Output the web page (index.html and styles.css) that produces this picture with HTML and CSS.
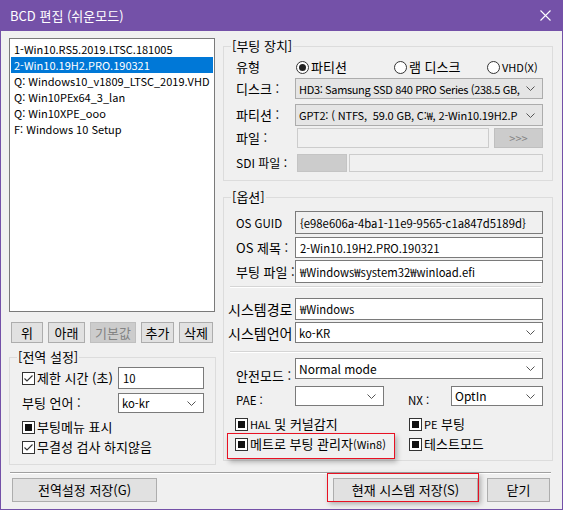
FILE: index.html
```html
<!DOCTYPE html>
<html lang="ko">
<head>
<meta charset="utf-8">
<title>BCD 편집 (쉬운모드)</title>
<link rel="stylesheet" href="styles.css">
</head>
<body>
<div class="window">
  <div class="titlebar">
    <span class="title">BCD 편집 (쉬운모드)</span>
    <svg class="close" width="11" height="11" viewBox="0 0 11 11"><path d="M0.5 0.5L10.5 10.5M10.5 0.5L0.5 10.5" stroke="#fff" stroke-width="1.1" fill="none"/></svg>
  </div>
  <div class="body">
    <div class="cols">
      <div class="leftcol">
        <ul class="listbox">
          <li>1-Win10.RS5.2019.LTSC.181005</li>
          <li class="sel">2-Win10.19H2.PRO.190321</li>
          <li>Q: Windows10_v1809_LTSC_2019.VHD</li>
          <li>Q: Win10PEx64_3_lan</li>
          <li>Q: Win10XPE_ooo</li>
          <li>F: Windows 10 Setup</li>
        </ul>
        <div class="btnrow">
          <div class="btn w32">위</div>
          <div class="btn w37">아래</div>
          <div class="btn w46 disabled">기본값</div>
          <div class="btn w33">추가</div>
          <div class="btn w34">삭제</div>
        </div>
        <fieldset class="group">
          <legend>[전역 설정]</legend>
          <div class="gbody gleft">
            <div class="lrow r1">
              <div class="chk lab96"><svg class="cb" width="13" height="13" viewBox="0 0 13 13"><rect x="0.5" y="0.5" width="12" height="12" fill="#fff" stroke="#333"/><path d="M2.5 6.5L5 9L10.5 3.5" fill="none" stroke="#333" stroke-width="1.1"/></svg><span>제한 시간 (초)</span></div>
              <div class="field w86">10</div>
            </div>
            <div class="lrow r2">
              <div class="lab lab96">부팅 언어 :</div>
              <div class="combo w86"><span class="ctext">ko-kr</span><svg class="chev" width="9" height="5" viewBox="0 0 9 5"><path d="M0.5 0.5L4.5 4.5L8.5 0.5" fill="none" stroke="#555"/></svg></div>
            </div>
            <div class="lrow r3">
              <div class="chk"><svg class="cb" width="13" height="13" viewBox="0 0 13 13"><rect x="0.5" y="0.5" width="12" height="12" fill="#fff" stroke="#333"/><rect x="3" y="3" width="7" height="7" fill="#111"/></svg><span>부팅메뉴 표시</span></div>
            </div>
            <div class="lrow r4">
              <div class="chk"><svg class="cb" width="13" height="13" viewBox="0 0 13 13"><rect x="0.5" y="0.5" width="12" height="12" fill="#fff" stroke="#333"/><path d="M2.5 6.5L5 9L10.5 3.5" fill="none" stroke="#333" stroke-width="1.1"/></svg><span>무결성 검사 하지않음</span></div>
            </div>
          </div>
        </fieldset>
      </div>
      <div class="rightcol">
        <fieldset class="group">
          <legend>[부팅 장치]</legend>
          <div class="gbody gright boot">
            <div class="row b1">
              <div class="lab">유형</div>
              <div class="radio rw98"><svg width="13" height="13" viewBox="0 0 13 13"><circle cx="6.5" cy="6.5" r="6" fill="#fff" stroke="#333"/><circle cx="6.5" cy="6.5" r="3.5" fill="#222"/></svg><span>파티션</span></div>
              <div class="radio rw93"><svg width="13" height="13" viewBox="0 0 13 13"><circle cx="6.5" cy="6.5" r="6" fill="#fff" stroke="#333"/></svg><span>램 디스크</span></div>
              <div class="radio"><svg width="13" height="13" viewBox="0 0 13 13"><circle cx="6.5" cy="6.5" r="6" fill="#fff" stroke="#333"/></svg><span class="small">VHD(X)</span></div>
            </div>
            <div class="row b2">
              <div class="lab">디스크 :</div>
              <div class="combo gray grow"><span class="ctext tight">HD3: Samsung SSD 840 PRO Series (238.5 GB,</span><svg class="chev" width="9" height="5" viewBox="0 0 9 5"><path d="M0.5 0.5L4.5 4.5L8.5 0.5" fill="none" stroke="#555"/></svg></div>
            </div>
            <div class="row b3">
              <div class="lab">파티션 :</div>
              <div class="combo gray grow"><span class="ctext">GPT2: ( NTFS,&nbsp; 59.0 GB, C:₩, 2-Win10.19H2.P</span><svg class="chev" width="9" height="5" viewBox="0 0 9 5"><path d="M0.5 0.5L4.5 4.5L8.5 0.5" fill="none" stroke="#555"/></svg></div>
            </div>
            <div class="row b4">
              <div class="lab">파일 :</div>
              <div class="field off fileinput"></div>
              <div class="btn disabled morebtn">&gt;&gt;&gt;</div>
            </div>
            <div class="row b5">
              <div class="lab sdi">SDI 파일 :</div>
              <div class="graybox"></div>
              <div class="field off grow"></div>
            </div>
          </div>
        </fieldset>
        <fieldset class="group opts">
          <legend>[옵션]</legend>
          <div class="gbody gright">
            <div class="row o1">
              <div class="lab lat">OS GUID</div>
              <div class="field ro grow">{e98e606a-4ba1-11e9-9565-c1a847d5189d}</div>
            </div>
            <div class="row o2">
              <div class="lab">OS 제목 :</div>
              <div class="field grow">2-Win10.19H2.PRO.190321</div>
            </div>
            <div class="row o3">
              <div class="lab">부팅 파일 :</div>
              <div class="field grow">₩Windows₩system32₩winload.efi</div>
            </div>
            <div class="etch e1"></div>
            <div class="row o4">
              <div class="lab wide">시스템경로</div>
              <div class="field grow">₩Windows</div>
            </div>
            <div class="row o5">
              <div class="lab wide">시스템언어</div>
              <div class="combo grow"><span class="ctext">ko-KR</span><svg class="chev" width="9" height="5" viewBox="0 0 9 5"><path d="M0.5 0.5L4.5 4.5L8.5 0.5" fill="none" stroke="#555"/></svg></div>
            </div>
            <div class="etch e2"></div>
            <div class="row o6">
              <div class="lab low">안전모드 :</div>
              <div class="combo grow"><span class="ctext">Normal mode</span><svg class="chev" width="9" height="5" viewBox="0 0 9 5"><path d="M0.5 0.5L4.5 4.5L8.5 0.5" fill="none" stroke="#555"/></svg></div>
            </div>
            <div class="row o7">
              <div class="lab low2">PAE :</div>
              <div class="combo paesel"><span class="ctext"></span><svg class="chev" width="9" height="5" viewBox="0 0 9 5"><path d="M0.5 0.5L4.5 4.5L8.5 0.5" fill="none" stroke="#555"/></svg></div>
              <div class="lab low2 nxlab">NX :</div>
              <div class="combo grow"><span class="ctext">OptIn</span><svg class="chev" width="9" height="5" viewBox="0 0 9 5"><path d="M0.5 0.5L4.5 4.5L8.5 0.5" fill="none" stroke="#555"/></svg></div>
            </div>
            <div class="chkgrid c1">
              <div class="chk"><svg class="cb" width="13" height="13" viewBox="0 0 13 13"><rect x="0.5" y="0.5" width="12" height="12" fill="#fff" stroke="#333"/><rect x="3" y="3" width="7" height="7" fill="#111"/></svg><span><span class="small">HAL</span> 및 커널감지</span></div>
              <div class="chk"><svg class="cb" width="13" height="13" viewBox="0 0 13 13"><rect x="0.5" y="0.5" width="12" height="12" fill="#fff" stroke="#333"/><rect x="3" y="3" width="7" height="7" fill="#111"/></svg><span><span class="small">PE</span> 부팅</span></div>
            </div>
            <div class="chkgrid c2">
              <div class="chk marked"><svg class="cb" width="13" height="13" viewBox="0 0 13 13"><rect x="0.5" y="0.5" width="12" height="12" fill="#fff" stroke="#333"/><rect x="3" y="3" width="7" height="7" fill="#111"/></svg><span>메트로 부팅 관리자<span class="small">(Win8)</span></span></div>
              <div class="chk"><svg class="cb" width="13" height="13" viewBox="0 0 13 13"><rect x="0.5" y="0.5" width="12" height="12" fill="#fff" stroke="#333"/><rect x="3" y="3" width="7" height="7" fill="#111"/></svg><span>테스트모드</span></div>
            </div>
          </div>
        </fieldset>
      </div>
    </div>
    <div class="sep"></div>
    <div class="footer">
      <div class="btn fbtn">전역설정 저장(G)</div>
      <div class="spacer"></div>
      <div class="btn fbtn marked2">현재 시스템 저장(S)</div>
      <div class="btn closebtn">닫기</div>
    </div>
  </div>
</div>
</body>
</html>
```

FILE: styles.css
```css
* { box-sizing: border-box; }
html, body { margin: 0; padding: 0; background: #f0f0f0; }
body {
  font-family: "Noto Sans CJK KR", "Noto Sans", sans-serif;
  font-size: 12px;
  line-height: 16px;
  color: #000;
}
.window {
  width: 563px;
  height: 510px;
  background: #f0f0f0;
  border: 1px solid #7451a8;
  border-top: 0;
  display: flex;
  flex-direction: column;
}
.titlebar {
  height: 31px;
  margin: 0 -1px;
  background: #7451a8;
  color: #fff;
  display: flex;
  align-items: center;
  justify-content: space-between;
  padding: 0 12px 0 10px;
  font-size: 13px;
}
.body {
  flex: 1;
  display: flex;
  flex-direction: column;
  padding: 7px 9px 0 8px;
}
.cols { display: flex; gap: 7px; }
.leftcol { width: 207px; display: flex; flex-direction: column; }
.rightcol { width: 330px; display: flex; flex-direction: column; }

.listbox {
  list-style: none;
  margin: 0;
  width: 206px;
  height: 274px;
  border: 1px solid #7a7a7a;
  background: #fff;
  padding: 2px 1px;
}
.listbox li {
  height: 16px;
  line-height: 16px;
  padding-left: 3px;
  white-space: nowrap;
  font-size: 11px;
}
.listbox li.sel { background: #0078d7; color: #fff; }

.btnrow { display: flex; gap: 5px; padding-left: 2px; margin-top: 10px; }
.btn {
  height: 21px;
  border: 1px solid #adadad;
  background: #e1e1e1;
  display: flex;
  align-items: center;
  justify-content: center;
  font-size: 13px;
  white-space: nowrap;
}
.btn.disabled { background: #cccccc; border-color: #bfbfbf; color: #838383; }
.w32 { width: 32px; } .w37 { width: 37px; } .w46 { width: 46px; } .w33 { width: 33px; } .w34 { width: 34px; }

.group {
  margin: 0;
  padding: 0;
  min-width: 0;
  border: 1px solid #dcdcdc;
}
.group legend {
  margin-left: 7px;
  padding: 0 1px;
  font-size: 13px;
  line-height: 16px;
}
.leftcol .group { margin-top: 6px; }
.opts { margin-top: 8px; }

.gbody { display: flex; flex-direction: column; }
.gleft { padding: 2px 11px 9px 12px; }
.gright { padding: 0 9px 8px 12px; }

.lrow, .row { display: flex; align-items: center; }
.lab { font-size: 13px; white-space: nowrap; flex: none; }
.lab.lat { font-size: 11.5px; }
.lab96 { width: 96px; }
.w86 { width: 86px; }
.r1 { height: 22px; }
.r2 { height: 20px; margin-top: 4px; }
.r3 { height: 16px; margin-top: 6px; }
.r4 { height: 16px; margin-top: 4px; }

.chk { display: flex; align-items: center; gap: 2px; font-size: 13px; white-space: nowrap; }
.cb { flex: none; }
.small { font-size: 11px; }

.field {
  height: 100%;
  border: 1px solid #7a7a7a;
  background: #fff;
  padding: 0 4px;
  display: flex;
  align-items: center;
  white-space: nowrap;
  overflow: hidden;
  font-size: 11.3px;
}
.field.ro { background: #f0f0f0; }
.field.off { background: #f0f0f0; border-color: #cccccc; }
.grow { flex: 1; min-width: 0; }

.combo {
  height: 100%;
  border: 1px solid #7a7a7a;
  background: #fff;
  display: flex;
  align-items: center;
  padding: 0 7px 0 3px;
  font-size: 11.3px;
}
.combo.gray { background: #e5e5e5; border-color: #acacac; font-size: 11px; letter-spacing: -0.15px; }
.combo .ctext { flex: 1; min-width: 0; overflow: hidden; white-space: nowrap; }
.combo .ctext.tight { letter-spacing: -0.35px; }
.chev { flex: none; margin-left: 3px; }

.gright .row > .lab:first-child { width: 59px; }
.gright .row > .lab.wide { width: 67px; margin-left: -8px; font-size: 14px; }
.gright .row > .lab.sdi { font-size: 12px; }

.radio { display: flex; align-items: center; gap: 2px; font-size: 13px; white-space: nowrap; }
.radio svg { flex: none; }
.rw98 { width: 98px; margin-left: 1px; }
.rw93 { width: 93px; }

.b1 { height: 20px; margin-top: 3px; }
.b2 { height: 21px; margin-top: 1px; }
.b3 { height: 22px; margin-top: 5px; }
.b4 { height: 20px; margin-top: 2px; }
.b5 { height: 18px; margin-top: 6px; }
.fileinput { width: 192px; margin-left: 2px; }
.morebtn { width: 49px; height: 20px; margin-left: 5px; font-size: 11px; color: #a0a0a0; }
.graybox { width: 50px; height: 100%; margin-left: 2px; margin-right: 2px; background: #cccccc; border: 1px solid #c4c4c4; }

.o1 { height: 23px; margin-top: 6px; }
.o2 { height: 21px; margin-top: 3px; }
.o3 { height: 23px; margin-top: 2px; }
.o4 { height: 22px; margin-top: 10px; }
.o5 { height: 21px; margin-top: 2px; }
.o6 { height: 21px; margin-top: 5px; align-items: flex-start; }
.o6 .lab { margin-top: 10px; }
.o6 .ctext { font-size: 12px; }
.o7 { height: 20px; margin-top: 7px; align-items: flex-start; }
.o7 .lab { margin-top: 6px; font-size: 11.5px; }
.o7 .ctext { font-size: 12px; }
.paesel { width: 89px; }
.nxlab { width: 43px; margin-left: 24px; }

.etch {
  height: 2px;
  border-top: 1px solid #d5d5d5;
  border-bottom: 1px solid #ffffff;
  margin-left: -6px;
  margin-right: 2px;
}
.e1 { margin-top: 3px; }
.e2 { margin-top: 8px; }

.chkgrid { display: grid; grid-template-columns: 174px 1fr; height: 16px; margin-left: -1px; }
.c1 { margin-top: 10px; }
.c2 { margin-top: 4px; }

.marked { position: relative; }
.marked::after {
  content: "";
  position: absolute;
  left: -8px;
  top: -3px;
  width: 166px;
  height: 24px;
  border: 1px solid #e81123;
  box-shadow: 2px 3px 5px rgba(0, 0, 0, 0.28);
}

.sep {
  margin-top: 7px;
  height: 2px;
  border-top: 1px solid #a0a0a0;
  border-bottom: 1px solid #ffffff;
  margin-left: 1px;
  margin-right: 2px;
}
.footer { display: flex; margin-top: 4px; padding-left: 3px; padding-right: 3px; }
.fbtn { width: 145px; height: 24px; }
.spacer { flex: 1; }
.closebtn { width: 63px; height: 24px; margin-left: 9px; }
.marked2 { position: relative; }
.marked2::after {
  content: "";
  position: absolute;
  left: -7px;
  top: -6px;
  right: -2px;
  bottom: -1px;
  border: 1px solid #e81123;
  box-shadow: 2px 2px 5px rgba(0, 0, 0, 0.28);
}
```
